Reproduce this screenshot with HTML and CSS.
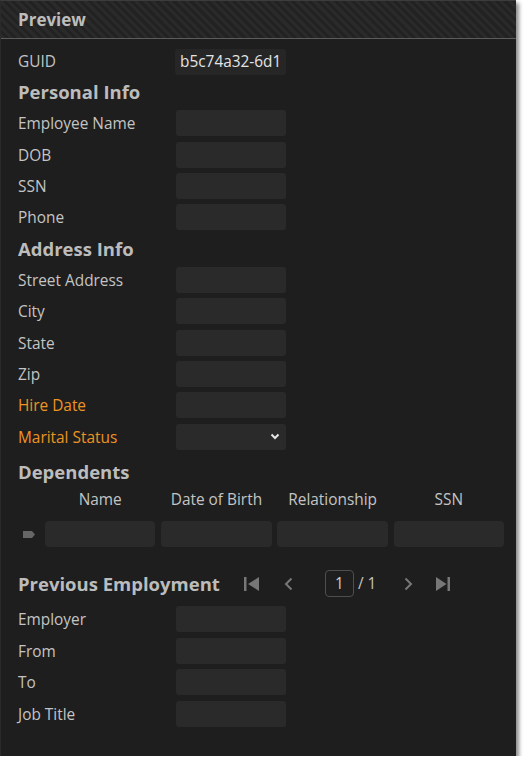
FILE: index.html
```html
<!DOCTYPE html>
<html>
<head>
<meta charset="utf-8">
<link rel="stylesheet" href="styles.css">
</head>
<body>
<div class="panel">
  <div class="header">Preview</div>
  <div class="content">
    <div class="form">
      <div class="label">GUID</div><div class="guid">b5c74a32-6d1</div>
      <div class="section">Personal Info</div>
      <div class="label">Employee Name</div><div class="input"></div>
      <div class="label">DOB</div><div class="input"></div>
      <div class="label">SSN</div><div class="input"></div>
      <div class="label">Phone</div><div class="input"></div>
      <div class="section">Address Info</div>
      <div class="label">Street Address</div><div class="input"></div>
      <div class="label">City</div><div class="input"></div>
      <div class="label">State</div><div class="input"></div>
      <div class="label">Zip</div><div class="input"></div>
      <div class="label req">Hire Date</div><div class="input"></div>
      <div class="label req">Marital Status</div>
      <div class="input select">
        <svg width="10" height="7" viewBox="0 0 10 7"><path d="M1.5 1.5 L5 5 L8.5 1.5" fill="none" stroke="#e6e6e6" stroke-width="2"/></svg>
      </div>
    </div>

    <div class="section dep-title">Dependents</div>
    <div class="table">
      <div class="th"></div>
      <div class="th">Name</div>
      <div class="th">Date of Birth</div>
      <div class="th">Relationship</div>
      <div class="th">SSN</div>
      <div class="indicator"><svg width="12" height="7" viewBox="0 0 12 7"><path d="M0 0 H9 L12 3.5 L9 7 H0 Z" fill="#666"/></svg></div>
      <div class="cell"></div>
      <div class="cell"></div>
      <div class="cell"></div>
      <div class="cell"></div>
    </div>

    <div class="prev-row">
      <div class="section prev-title">Previous Employment</div>
      <div class="pager">
        <svg class="pbtn first" width="16" height="14" viewBox="0 0 16 14"><rect x="0" y="0" width="2.5" height="14" fill="#777"/><path d="M15 0 L4 7 L15 14 Z" fill="#777"/></svg>
        <svg class="pbtn prev" width="9" height="14" viewBox="0 0 9 14"><path d="M7.5 1.5 L2 7 L7.5 12.5" fill="none" stroke="#777" stroke-width="2"/></svg>
        <div class="pagebox">1</div>
        <div class="pagetotal">/ 1</div>
        <svg class="pbtn next" width="9" height="14" viewBox="0 0 9 14"><path d="M1.5 1.5 L7 7 L1.5 12.5" fill="none" stroke="#777" stroke-width="2"/></svg>
        <svg class="pbtn last" width="15" height="14" viewBox="0 0 15 14"><path d="M1 0 L11.5 7 L1 14 Z" fill="#777"/><rect x="12.5" y="0" width="2.5" height="14" fill="#777"/></svg>
      </div>
    </div>

    <div class="form form2">
      <div class="label">Employer</div><div class="input"></div>
      <div class="label">From</div><div class="input"></div>
      <div class="label">To</div><div class="input"></div>
      <div class="label">Job Title</div><div class="input"></div>
    </div>
  </div>
</div>
</body>
</html>
```
FILE: styles.css
```css
html, body {
  margin: 0;
  padding: 0;
  background: #ffffff;
}
body {
  font-family: "Open Sans", "Noto Sans", sans-serif;
}
.panel {
  width: 516px;
  height: 756px;
  background: #1e1e1e;
  border-top: 1px solid #3c3c3c;
  border-left: 1px solid #2a2a2a;
  box-sizing: border-box;
  box-shadow: 3px 3px 4px rgba(0, 0, 0, 0.45);
  overflow: hidden;
}
.header {
  height: 38px;
  box-sizing: border-box;
  border-bottom: 1px solid #5c5c5c;
  background: repeating-linear-gradient(45deg, #2a2a2a 0 3px, #222222 3px 6px);
  color: #bdbdbd;
  font-weight: 700;
  font-size: 17px;
  line-height: 37px;
  padding-left: 17px;
}
.content {
  padding: 6px 0 0 17px;
}
.form {
  display: grid;
  grid-template-columns: 158px 110px;
  grid-auto-rows: 31.33px;
  align-items: center;
}
.label {
  color: #c4c4c4;
  font-size: 15.4px;
  line-height: 20px;
  padding-top: 2px;
}
.label.req {
  color: #ee9422;
}
.section {
  grid-column: 1 / -1;
  color: #bcbcbc;
  font-weight: 700;
  font-size: 18.5px;
  line-height: 24px;
}
.input {
  height: 26px;
  background: #2a2a2a;
  border-radius: 3px;
}
.guid {
  height: 26px;
  width: 111px;
  margin-left: -1px;
  margin-top: 2px;
  background: #262626;
  border-radius: 3px;
  color: #e4e4e4;
  font-size: 15.4px;
  line-height: 26px;
  padding-left: 5px;
  box-sizing: border-box;
  overflow: hidden;
  white-space: nowrap;
}
.select {
  display: flex;
  justify-content: flex-end;
  align-items: center;
  padding-right: 6px;
  box-sizing: border-box;
}
.select svg {
  display: block;
}
.dep-title {
  margin-top: 4px;
  height: 31px;
  line-height: 31px;
}
.table {
  display: grid;
  grid-template-columns: 21.3px repeat(4, 110.5px);
  column-gap: 5.7px;
  grid-template-rows: 24px 36px;
  align-items: end;
}
.th {
  color: #c4c4c4;
  font-size: 15.4px;
  line-height: 22px;
  text-align: center;
  align-self: center;
  padding-top: 1px;
}
.cell {
  height: 26px;
  background: #2a2a2a;
  border-radius: 4px;
}
.indicator {
  align-self: center;
  padding-top: 11px;
  padding-left: 5px;
}
.indicator svg {
  display: block;
}
.prev-row {
  display: flex;
  align-items: center;
  height: 27px;
  margin-top: 23px;
}
.prev-title {
  margin-right: 24px;
}
.pager {
  display: flex;
  align-items: center;
}
.pbtn {
  display: block;
}
.first { margin-right: 24px; }
.prev { margin-right: 32px; }
.pagebox {
  width: 29px;
  height: 27px;
  box-sizing: border-box;
  border: 1px solid #4e4e4e;
  border-radius: 4px;
  color: #cfcfcf;
  font-size: 15.4px;
  line-height: 25px;
  text-align: center;
}
.pagetotal {
  color: #c4c4c4;
  font-size: 15.4px;
  margin-left: 4px;
  margin-right: 28px;
}
.next { margin-right: 22px; }
.form2 {
  margin-top: 6px;
  grid-auto-rows: 31.67px;
}
```
